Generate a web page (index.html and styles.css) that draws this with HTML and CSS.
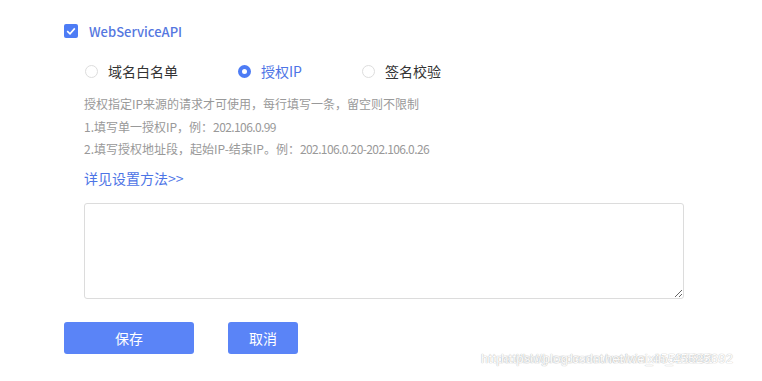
FILE: index.html
```html
<!DOCTYPE html>
<html lang="zh-CN">
<head>
<meta charset="utf-8">
<link rel="stylesheet" href="styles.css">
</head>
<body>
<div class="page">
  <div class="check-row">
    <span class="checkbox">
      <svg viewBox="0 0 14 14" width="14" height="14"><path d="M3.2 7.2 L6 9.8 L10.8 4.4" fill="none" stroke="#fff" stroke-width="1.6"/></svg>
    </span>
    <span class="check-label">WebServiceAPI</span>
  </div>
  <div class="section">
    <div class="radios">
      <label class="radio"><span class="dot"></span><span>域名白名单</span></label>
      <label class="radio checked"><span class="dot"></span><span>授权IP</span></label>
      <label class="radio"><span class="dot"></span><span>签名校验</span></label>
    </div>
    <div class="help">
      <p>授权指定IP来源的请求才可使用，每行填写一条，留空则不限制</p>
      <p>1.填写单一授权IP，例：<span class="num">202.106.0.99</span></p>
      <p>2.填写授权地址段，起始IP-结束IP。例：<span class="num">202.106.0.20-202.106.0.26</span></p>
    </div>
    <a class="link">详见设置方法&gt;&gt;</a>
    <textarea class="area"></textarea>
  </div>
  <div class="buttons">
    <button class="btn save">保存</button>
    <button class="btn cancel">取消</button>
  </div>
  <div class="watermark"><span class="w1">https://blog.csdn.net/weixin_45525692</span><span class="w2">https://blog.csdn.net/weixin_45525692</span></div>
</div>
</body>
</html>
```
FILE: styles.css
```css
* { box-sizing: border-box; }
html, body { margin: 0; padding: 0; background: #fff; }
body {
  font-family: "Noto Sans CJK SC", "Microsoft YaHei", sans-serif;
  width: 762px;
  height: 381px;
  overflow: hidden;
}
.page {
  position: relative;
  padding: 22px 0 0 64px;
  height: 381px;
}
.check-row {
  display: flex;
  align-items: center;
  height: 18px;
}
.checkbox {
  width: 14px;
  height: 14px;
  background: #4d7cf5;
  border-radius: 2px;
  display: flex;
}
.check-label {
  margin-left: 11px;
  font-size: 13px;
  font-weight: 500;
  color: #5577e0;
}
.section {
  padding-left: 20px;
}
.radios {
  display: flex;
  align-items: center;
  margin-top: 22px;
  height: 18px;
}
.radio {
  display: flex;
  align-items: center;
  font-size: 14px;
  color: #333;
  margin-right: 59px;
}
.dot {
  width: 13px;
  height: 13px;
  border: 1px solid #ddd;
  border-radius: 50%;
  margin: 0 10px 0 1px;
  background: #fff;
}
.radio.checked .dot {
  border: 4px solid #4d7cf5;
  background: #fff;
}
.radio.checked { color: #4d74e6; }
.help {
  margin-top: 13px;
  font-size: 12px;
  color: #999;
}
.help p {
  margin: 0;
  line-height: 22.5px;
}
.num {
  letter-spacing: -0.6px;
}
.link {
  display: block;
  margin-top: 7px;
  font-size: 14px;
  color: #4d74e6;
  line-height: 20px;
}
.area {
  display: block;
  margin-top: 15px;
  width: 600px;
  height: 96px;
  border: 1px solid #dcdcdc;
  border-radius: 3px;
  resize: both;
}
.buttons {
  display: flex;
  gap: 34px;
  margin-top: 23px;
}
.btn {
  height: 32px;
  border: none;
  border-radius: 3px;
  background: #5a84f7;
  color: #fff;
  font-family: "Noto Sans CJK SC", sans-serif;
  font-size: 14px;
  padding: 0;
}
.save { width: 130px; }
.cancel { width: 70px; }
.watermark {
  position: absolute;
  left: 481px;
  top: 351px;
  font-family: "Liberation Sans", sans-serif;
  font-size: 13px;
  color: #fff;
  letter-spacing: 0.3px;
}
.watermark span {
  position: absolute;
  white-space: nowrap;
  text-shadow: 0 0 1px #b8b8b8, 0 0 1px #b8b8b8;
}
.w1 { left: 0; top: 0; }
.w2 { left: 20px; top: 0; opacity: 0.8; }
```
